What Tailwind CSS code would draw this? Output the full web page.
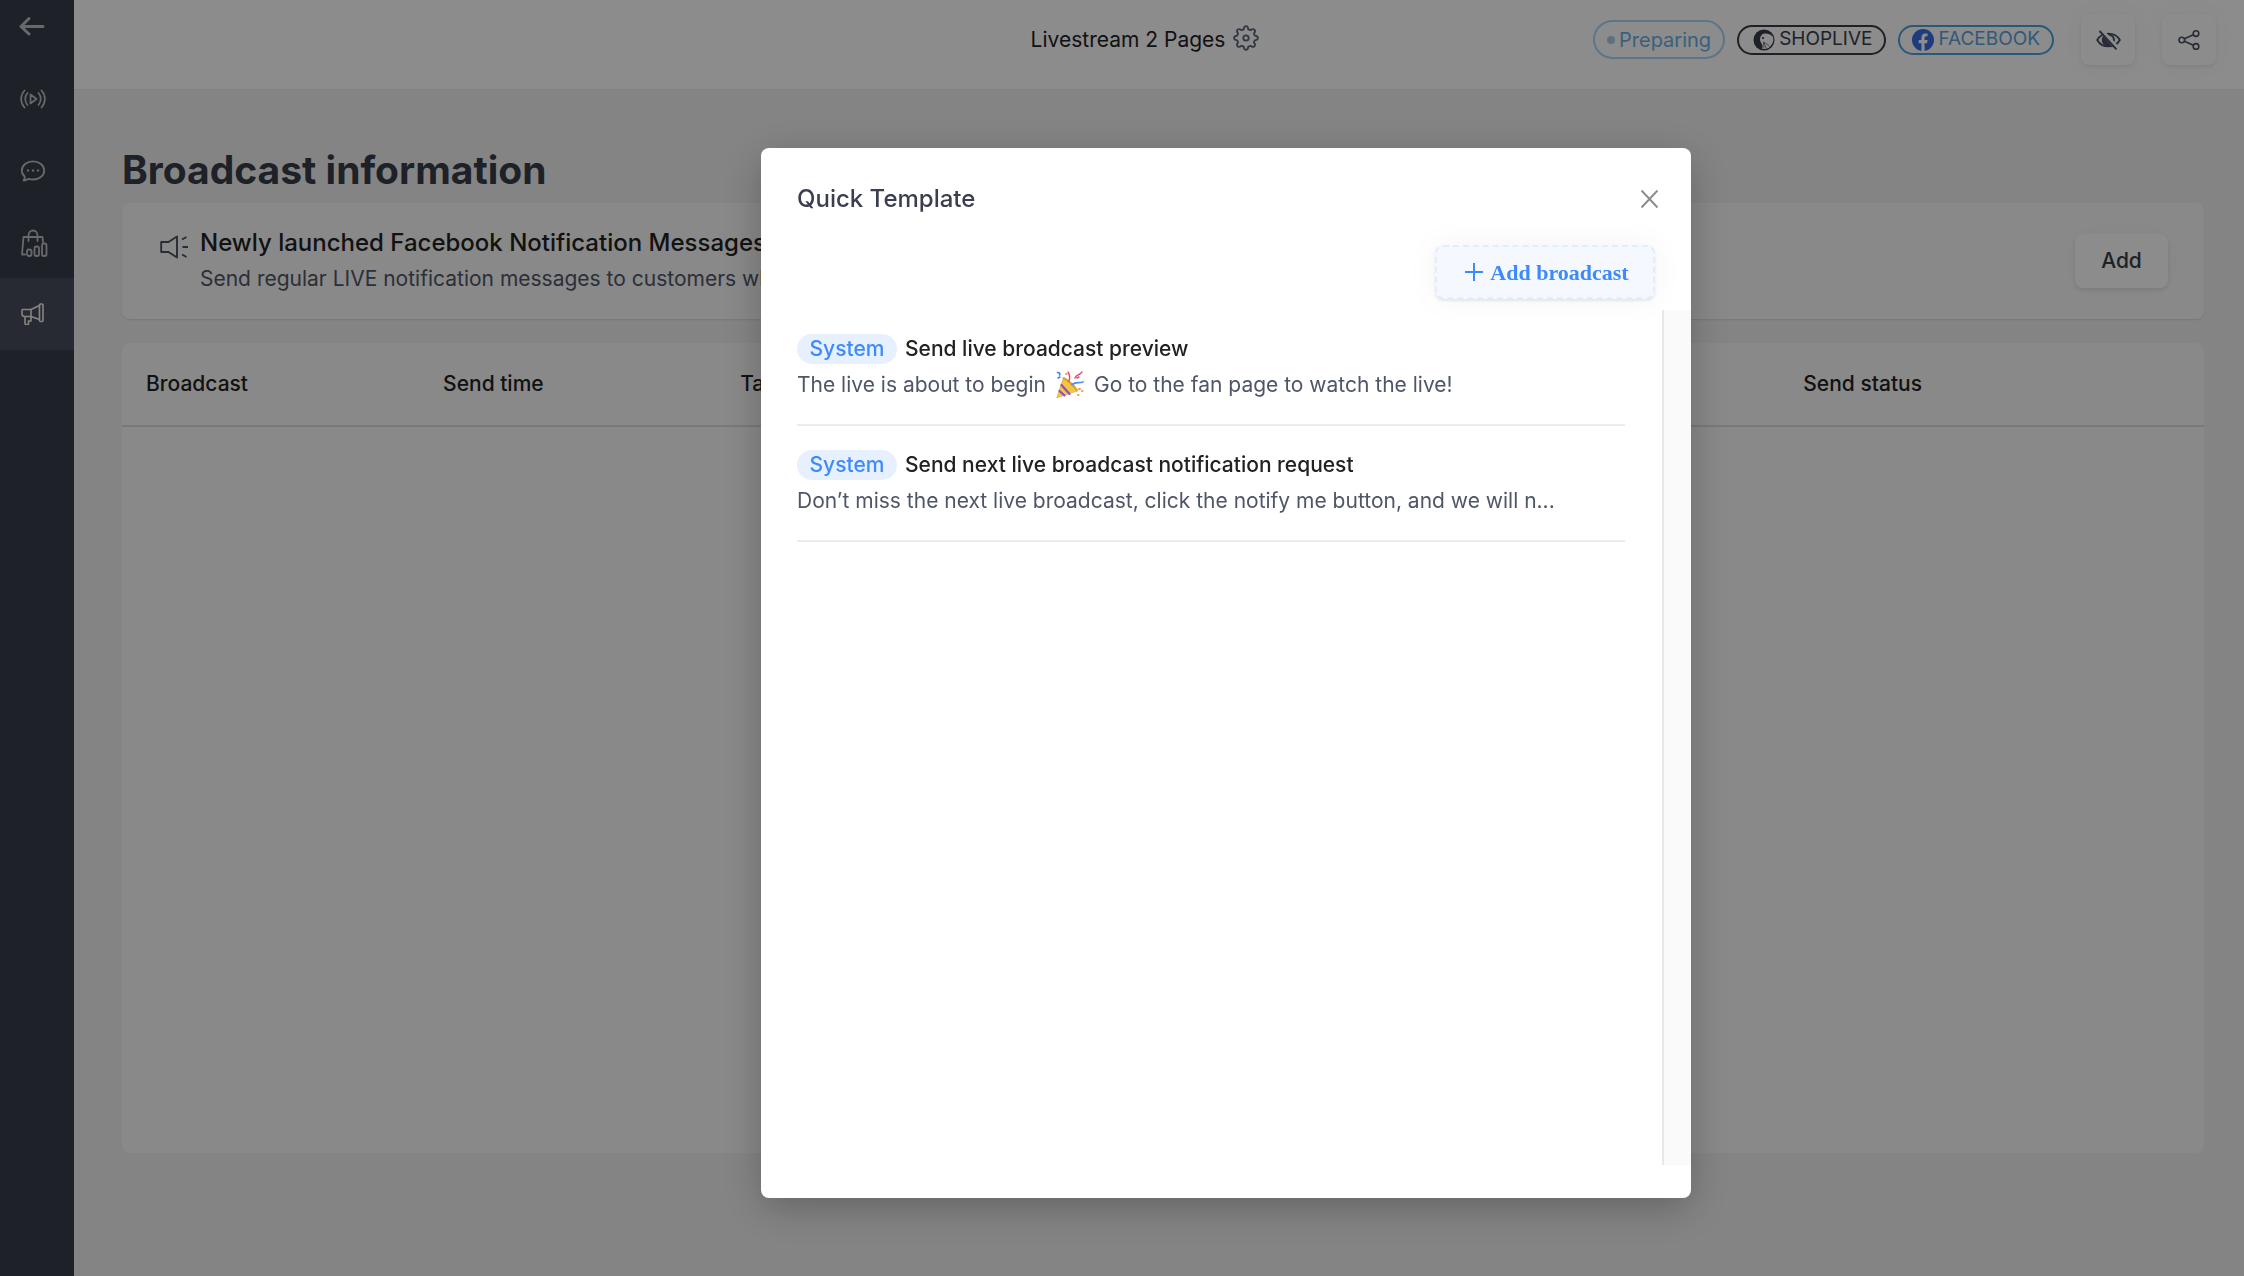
<!DOCTYPE html>
<html lang="en">
<head>
  <meta charset="UTF-8" />
  <title>Broadcast information</title>
  <script src="https://cdn.jsdelivr.net/npm/@tailwindcss/browser@4"></script>
</head>
<body class="bg-[#f1f1f1] text-[#222222] font-[Inter,sans-serif] text-[21px]">

  <div class="flex min-h-screen">
    <!-- Sidebar -->
    <nav class="w-[74px] shrink-0 bg-[#383d4a] text-[#bcbfc8]">
      <a href="#" aria-label="Back" class="flex h-[62px] pl-[19px] pt-[16px]">
        <svg class="w-[26px] h-[20px]" viewBox="0 0 26 20" fill="none" stroke="currentColor" stroke-width="3" stroke-linecap="round" stroke-linejoin="round"><path d="M24 10.500H2M10 2.500L2 10.500l8 7.500" /></svg>
      </a>
      <a href="#" aria-label="Live" class="flex h-[72px] items-center pl-5 pt-[2px]">
        <svg class="w-[26px] h-[20px]" viewBox="0 0 26 20" fill="none" stroke="currentColor" stroke-width="1.700" stroke-linecap="round" stroke-linejoin="round"><path d="M10.500 5.500v9l6-4.500zM7.500 4c-3 3.500-3 8.500 0 12M4.500 1.500C0 6.500 0 13.500 4.500 18.500M18.500 4c3 3.500 3 8.500 0 12M21.500 1.500c4.500 5 4.500 12 0 17" /></svg>
      </a>
      <a href="#" aria-label="Comments" class="flex h-[72px] items-center pl-5 pt-[2px]">
        <svg class="w-[26px] h-[24px]" viewBox="0 0 26 24" fill="none" stroke="currentColor" stroke-width="1.800" stroke-linejoin="round"><path d="M3.500 21.500c1-1.200 1.500-2.700 1.200-4C2.700 15.800 1.800 13.800 1.800 11.500 1.800 6.300 6.800 2.300 13 2.300s11.200 4 11.200 9.200-5 9-11.200 9c-1.600 0-3.100-.2-4.500-.7-1.500 1-3.200 1.700-5 1.700z" /><path d="M8 10.500v2M13 10.500v2M18 10.500v2" stroke-width="2.200" /></svg>
      </a>
      <a href="#" aria-label="Products" class="flex h-[72px] items-center pl-5 pt-[2px]">
        <svg class="w-[28px] h-[28px]" viewBox="0 0 28 28" fill="none" stroke="currentColor" stroke-width="1.800" stroke-linecap="round" stroke-linejoin="round"><path d="M5 25.500H2L3.500 8h19l.5 5M8.500 12V6.500C8.500 3.500 10.500 1.500 13 1.500s4.500 2 4.500 5V12" /><rect x="7" y="20.500" width="4.500" height="6.500" rx="2" /><rect x="14.500" y="17.500" width="4.500" height="9.500" rx="2" /><rect x="22" y="14.500" width="4.500" height="12.500" rx="2" /></svg>
      </a>
      <a href="#" aria-label="Broadcast" class="flex h-[72px] items-center pl-5 bg-[#4a4e5d] text-[#f4f1ea]">
        <svg class="w-[25px] h-[22px]" viewBox="0 0 25 22" fill="none" stroke="currentColor" stroke-width="1.600" stroke-linecap="round" stroke-linejoin="round"><path d="M2.500 6.500H11v7H4.500a2.500 2.500 0 0 1-2.500-2.500V7M11 6.500l8.500-4M11 13.500l8.500 3" /><rect x="19.500" y="1" width="3.500" height="17.500" rx="1" /><path d="M5 14v6.500c0 .6.400 1 1 1h1.500c.6 0 1-.4 1-1V18h2.500v-4" /></svg>
      </a>
    </nav>

    <div class="flex flex-1 flex-col">
      <!-- Header -->
      <header class="flex h-[90px] items-center bg-white pr-7 pb-[10px] border-b border-[#ececec]">
        <div class="flex-1"></div>
        <div class="flex items-center gap-2">
          <h2>Livestream 2 Pages</h2>
          <button aria-label="Settings" class="pb-1">
            <svg class="w-[26px] h-[26px] text-[#5b6478]" viewBox="0 0 26 26" fill="none" stroke="currentColor" stroke-width="1.800" stroke-linejoin="round"><circle cx="13" cy="13" r="2.700" /><path d="M10.700 4.300C10.900 2.200 11.500 1.200 13 1.200s2.100 1 2.300 3.100l2.200.9c1.600-1.300 2.900-1.500 3.900-.5s.8 2.300-.500 3.900l.9 2.100c2.100.2 3.100.8 3.100 2.300s-1 2.100-3.100 2.300l-.9 2.100c1.300 1.600 1.500 2.900.5 3.900s-2.300.8-3.900-.5l-2.200.9c-.2 2.100-.8 3.100-2.300 3.100s-2.100-1-2.300-3.100l-2.200-.9c-1.600 1.300-2.900 1.500-3.900.5s-.8-2.300.5-3.900l-.9-2.100C2.100 15.100 1.100 14.500 1.100 13s1-2.100 3.100-2.300l.9-2.100C3.800 7 3.600 5.700 4.600 4.700s2.300-.8 3.900.5z" /></svg>
          </button>
        </div>
        <div class="flex flex-1 items-center justify-end">
          <span class="flex h-[39px] items-center gap-1 rounded-full border-2 border-[#a9d5f5] px-3 text-xl text-[#67b0e4]"><i class="size-2 rounded-full bg-[#a9cbe6]"></i>Preparing</span>
          <span class="ml-3 flex h-[30px] items-center gap-1 rounded-full border-2 border-[#383d4a] pl-[14px] pr-[12px] text-[19px] text-[#383d4a]">
            <svg class="size-[22px]" viewBox="0 0 22 22"><circle cx="11" cy="11" r="10.500" fill="#383d4a" /><path d="M8.500 6c3-2.500 9-1.500 11.500 2 1 4-.5 8-4.500 11-2 1-4.500 1.300-6.500.8 1.200-2 .5-3.800-.500-5.300C6.500 12 6.500 8.500 8.500 6z" fill="#fff" /><circle cx="10" cy="9" r="1.100" fill="#383d4a" /><path d="M10.500 13l6 4M10.500 13l3 6.500M10.500 13l.5 6.500" stroke="#383d4a" stroke-width=".6" /></svg>SHOPLIVE</span>
          <span class="ml-3 flex h-[30px] items-center gap-1 rounded-full border-2 border-[#4ea0dc] px-[12px] text-[19px] text-[#5ba3da]">
            <svg class="size-[22px]" viewBox="0 0 22 22"><circle cx="11" cy="11" r="11" fill="#366de6" /><path d="M9.400 22v-7.800H6.700V11h2.700V8.700c0-2.800 1.600-4.300 4-4.300 1.200 0 2.200.2 2.200.2v2.600h-1.300c-1.300 0-1.700.8-1.700 1.700V11h3l-.5 3.200h-2.500V22z" fill="#fff" /></svg>FACEBOOK</span>
          <button aria-label="Hide" class="ml-[27px] flex h-[51px] w-[54px] items-center justify-center rounded-lg bg-white text-[#4a5164] shadow-[0_2px_4px_rgba(0,0,0,0.08),0_0_24px_rgba(0,0,0,0.03)]">
            <svg class="w-[25px] h-[20px]" viewBox="0 0 25 20" fill="none" stroke="currentColor" stroke-width="1.900" stroke-linecap="round"><path d="M1.200 10C6 1.500 19 1.500 23.800 10 19 18.500 6 18.500 1.200 10z" /><path d="M10 4a6.200 6.200 0 0 0 3 12 6.500 6.500 0 0 0 4-1.500z" fill="currentColor" stroke="none" /><path d="M13 4.500c3.500.5 5.500 3.500 4.800 6.500" /><path d="M5.500 1L21 18" stroke="#fff" stroke-width="4.500" /><path d="M4 1.500L20 18.800" /></svg>
          </button>
          <button aria-label="Share" class="ml-[27px] flex h-[51px] w-[54px] items-center justify-center rounded-lg bg-white text-[#4a5164] shadow-[0_2px_4px_rgba(0,0,0,0.08),0_0_24px_rgba(0,0,0,0.03)]">
            <svg class="w-[22px] h-[20px]" viewBox="0 0 22 20" fill="none" stroke="currentColor" stroke-width="1.600"><circle cx="3.800" cy="10" r="2.800" /><circle cx="18" cy="3.600" r="2.800" /><circle cx="18" cy="16.400" r="2.800" /><path d="M6.400 8.800l9-4M6.400 11.200l9 4" /></svg>
          </button>
        </div>
      </header>

      <main class="flex flex-1 flex-col pt-[53px] pl-12 pr-10 pb-[123px]">
        <h1 class="h-[60px] text-[39px] leading-[54px] font-bold text-[#383d4a]">Broadcast information</h1>

        <!-- Notice -->
        <section class="flex h-[116px] items-center rounded-lg bg-[#fafafa] pl-[38px] pr-9 shadow-[0_1px_2px_rgba(0,0,0,0.1)]">
          <svg class="mb-7 w-[28px] h-[24px] text-[#4a5164]" viewBox="0 0 28 24" fill="none" stroke="currentColor" stroke-width="1.900" stroke-linejoin="round"><path d="M17 1.500v21L8.500 17H1.200V7h7.300zM22 4.500l4.500-2.500M22.500 12H28M22 19.500l4.500 2.500" /></svg>
          <div class="ml-3 flex-1">
            <h3 class="text-2xl leading-[36px] font-medium">Newly launched Facebook Notification Messages</h3>
            <p class="leading-[36px] text-[#4f5668]">Send regular LIVE notification messages to customers who subscribe</p>
          </div>
          <button class="h-[54px] w-[93px] rounded-lg bg-white font-medium text-[#383d4a] shadow-[0_2px_4px_rgba(0,0,0,0.1),0_0_24px_rgba(0,0,0,0.03)]">Add</button>
        </section>

        <!-- Broadcast table -->
        <section class="mt-6 flex-1 rounded-lg bg-[#fafafa]">
          <table class="w-full table-fixed text-left">
            <thead>
              <tr class="h-[83px] border-b-2 border-[#d5dfe6]">
                <th class="w-[14.270%] px-6 font-medium">Broadcast</th>
                <th class="w-[14.270%] px-6 font-medium">Send time</th>
                <th class="px-6 font-medium">Tag</th>
                <th class="w-[20.400%] px-6 font-medium">Send status</th>
              </tr>
            </thead>
          </table>
        </section>
      </main>
    </div>
  </div>

  <!-- Modal -->
  <div class="fixed inset-0 flex items-start justify-center bg-black/45 pl-[208px] pt-[148px]">
    <div role="dialog" aria-labelledby="dialog-title" class="w-[930px] rounded-lg bg-white pb-[33px] shadow-[0_10px_40px_rgba(0,0,0,0.25)]">
      <div class="flex h-[97px] items-center justify-between pl-9 pr-[33px] pt-1">
        <h2 id="dialog-title" class="text-2xl font-medium text-[#3a3f50]">Quick Template</h2>
        <button aria-label="Close" class="text-[#8c8c8c]">
          <svg class="w-[17px] h-[18px]" viewBox="0 0 17 18" fill="none" stroke="currentColor" stroke-width="2"><path d="M.5.5l16 17M16.500.5l-16 17" /></svg>
        </button>
      </div>
      <div class="flex h-[65px] justify-end pr-9">
        <button class="flex h-[54px] w-[220px] items-center justify-center gap-[7px] rounded-lg border-2 border-dashed border-[#e2edfe] bg-[#f5f9ff] pl-1 font-[Liberation_Serif,serif] text-[22px] font-bold text-[#3d8bfa] shadow-[0_2px_3px_rgba(0,0,0,0.08),0_0_32px_rgba(0,0,0,0.05)]">
          <svg class="size-[18px]" viewBox="0 0 18 18" stroke="currentColor" stroke-width="2"><path d="M9 0v18M0 9h18" /></svg>
          Add broadcast
        </button>
      </div>
      <div class="flex h-[67vh]">
        <ul class="flex-1 pl-9 pr-[37px]">
          <li class="border-b-2 border-[#e9edf2] py-6">
            <div class="flex h-[30px] items-center gap-2">
              <span class="flex h-[30px] w-[100px] items-center justify-center rounded-full bg-[#e6f0ff] font-medium text-[#3d8bfa]">System</span>
              <h4 class="font-medium">Send live broadcast preview</h4>
            </div>
            <p class="mt-[6px] flex h-[30px] items-center gap-[10px] text-[#4f5668]">
              The live is about to begin
              <svg class="size-[28px] shrink-0" viewBox="0 0 28 28" fill="none" stroke-linecap="round"><path d="M1 26.500L7.500 7l13.500 12.500z" fill="#f2c744" stroke="#dda62c" stroke-width=".8" stroke-linejoin="round" /><path d="M5.500 14l8 9M3.500 20l5 4.500" stroke="#8a4fc9" stroke-width="2.200" /><path d="M7.500 7c5 2.500 10 7 13.500 12.500" stroke="#d9a42c" stroke-width="2" /><path d="M1.500 1.500c2 0 3 1 2 2.500M2 7l2-1" stroke="#3f7fe8" stroke-width="1.600" /><path d="M12 1c2 3 2 6 1 9M19 7c1-3 3-3 5-4l2-2M21 7l2-1" stroke="#e5486f" stroke-width="1.400" /><path d="M16 13.500c4-3 7-1 11-2.500" stroke="#4a92ee" stroke-width="1.800" /><path d="M23 18h1M26 20h.5M22 24h.5M10 3h.5" stroke="#ee9a4d" stroke-width="2" /></svg>
              Go to the fan page to watch the live!
            </p>
          </li>
          <li class="border-b-2 border-[#e9edf2] py-6">
            <div class="flex h-[30px] items-center gap-2">
              <span class="flex h-[30px] w-[100px] items-center justify-center rounded-full bg-[#e6f0ff] font-medium text-[#3d8bfa]">System</span>
              <h4 class="font-medium">Send next live broadcast notification request</h4>
            </div>
            <p class="mt-[6px] flex h-[30px] items-center text-[#4f5668]">Don’t miss the next live broadcast, click the notify me button, and we will n...</p>
          </li>
        </ul>
        <!-- Scroll track -->
        <div class="w-[29px] border-l-2 border-[#e8e8e8] bg-[#fafafa]"></div>
      </div>
    </div>
  </div>

</body>
</html>
